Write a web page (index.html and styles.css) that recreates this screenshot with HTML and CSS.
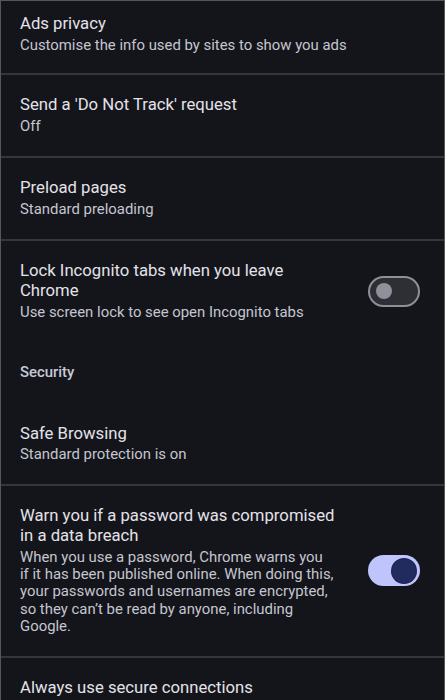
FILE: index.html
```html
<!DOCTYPE html>
<html lang="en">
<head>
<meta charset="utf-8">
<title>Privacy and security</title>
<link rel="stylesheet" href="styles.css">
</head>
<body>
<div class="screen">
  <div class="item first">
    <div class="text">
      <div class="title">Ads privacy</div>
      <div class="sub">Customise the info used by sites to show you ads</div>
    </div>
  </div>
  <div class="divider"></div>
  <div class="item">
    <div class="text">
      <div class="title">Send a 'Do Not Track' request</div>
      <div class="sub">Off</div>
    </div>
  </div>
  <div class="divider"></div>
  <div class="item">
    <div class="text">
      <div class="title">Preload pages</div>
      <div class="sub">Standard preloading</div>
    </div>
  </div>
  <div class="divider"></div>
  <div class="item">
    <div class="text narrow">
      <div class="title">Lock Incognito tabs when you leave Chrome</div>
      <div class="sub">Use screen lock to see open Incognito tabs</div>
    </div>
    <div class="switch off"><span class="thumb"></span></div>
  </div>
  <div class="header">Security</div>
  <div class="item">
    <div class="text">
      <div class="title">Safe Browsing</div>
      <div class="sub">Standard protection is on</div>
    </div>
  </div>
  <div class="divider"></div>
  <div class="item">
    <div class="text narrow">
      <div class="title">Warn you if a password was compromised in a data breach</div>
      <div class="sub">When you use a password, Chrome warns you if&nbsp;it has been published online. When doing this, your passwords and usernames are encrypted, so they can’t be read by anyone, including Google.</div>
    </div>
    <div class="switch on"><span class="thumb"></span></div>
  </div>
  <div class="divider"></div>
  <div class="item">
    <div class="text">
      <div class="title">Always use secure connections</div>
    </div>
  </div>
</div>
</body>
</html>
```
FILE: styles.css
```css
html, body {
  margin: 0;
  padding: 0;
  background: #14151b;
}
body {
  font-family: Roboto, "Noto Sans", sans-serif;
  -webkit-font-smoothing: antialiased;
}
.screen {
  box-sizing: border-box;
  width: 445px;
  height: 700px;
  overflow: hidden;
  background: #14151b;
  border: 1px solid #55565c;
  border-bottom: none;
}
.item {
  display: flex;
  align-items: center;
  gap: 31px;
  padding: 20.5px 25px 20.5px 19px;
}
.item.first {
  padding-top: 13px;
  padding-bottom: 19px;
}
.text {
  flex: 1;
  min-width: 0;
}
.text.narrow {
  flex: 0 0 317px;
}
.title {
  font-size: 16.7px;
  line-height: 19.7px;
  color: #e4e2e9;
}
.sub {
  margin-top: 3px;
  font-size: 14.9px;
  line-height: 17.25px;
  color: #c5c6d0;
}
.divider {
  height: 2px;
  background: #35363c;
}
.header {
  padding: 20px 19px 21.5px;
  font-size: 14.9px;
  line-height: 20px;
  font-weight: 500;
  color: #c8c9d8;
}
.switch {
  position: relative;
  box-sizing: border-box;
  flex: 0 0 52px;
  width: 52px;
  height: 31px;
  border-radius: 16px;
}
.switch.off {
  background: #2e2f35;
  border: 2px solid #8e9099;
}
.switch.on {
  background: #bfc4fd;
}
.thumb {
  position: absolute;
  border-radius: 50%;
}
.switch.off .thumb {
  width: 16px;
  height: 16px;
  left: 6px;
  top: 5.5px;
  background: #8f9099;
}
.switch.on .thumb {
  width: 24px;
  height: 24px;
  right: 4px;
  top: 3.5px;
  background: #222b5d;
  box-shadow: 0 0 0 1px #1a2250;
}
```
